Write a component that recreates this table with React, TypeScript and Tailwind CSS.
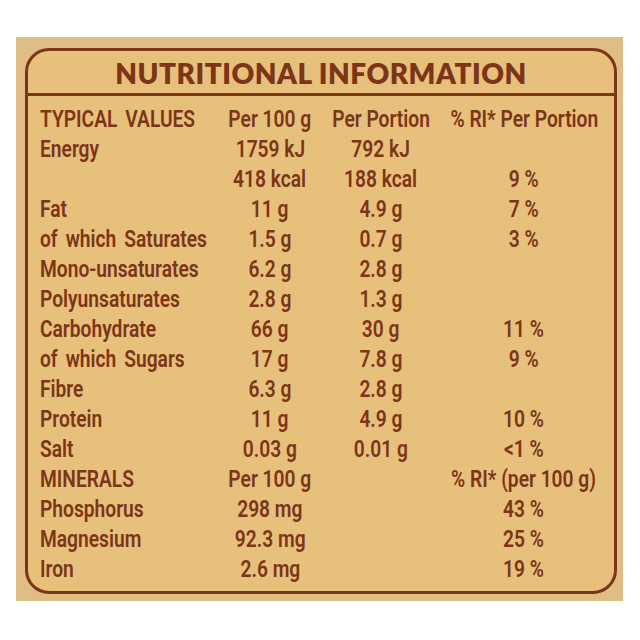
import React from 'react';

type Row = [string, string, string, string];

const rows: Row[] = [
  ['TYPICAL VALUES', 'Per 100 g', 'Per Portion', '% RI* Per Portion'],
  ['Energy', '1759 kJ', '792 kJ', ''],
  ['', '418 kcal', '188 kcal', '9 %'],
  ['Fat', '11 g', '4.9 g', '7 %'],
  ['of which Saturates', '1.5 g', '0.7 g', '3 %'],
  ['Mono-unsaturates', '6.2 g', '2.8 g', ''],
  ['Polyunsaturates', '2.8 g', '1.3 g', ''],
  ['Carbohydrate', '66 g', '30 g', '11 %'],
  ['of which Sugars', '17 g', '7.8 g', '9 %'],
  ['Fibre', '6.3 g', '2.8 g', ''],
  ['Protein', '11 g', '4.9 g', '10 %'],
  ['Salt', '0.03 g', '0.01 g', '<1 %'],
  ['MINERALS', 'Per 100 g', '', '% RI* (per 100 g)'],
  ['Phosphorus', '298 mg', '', '43 %'],
  ['Magnesium', '92.3 mg', '', '25 %'],
  ['Iron', '2.6 mg', '', '19 %'],
];

export default function App() {
  return (
    <div className="w-[640px] h-[640px] bg-white pt-[37px] pl-[16px]">
      <div className="w-[607px] h-[564px] bg-[#dfbd85] pt-[11px] pl-[9px]">
        <div className="w-[592px] h-[546px] rounded-[24px] border-[3px] border-[#7c3517] bg-[#e7c07c] text-[#7c3517]">
          <h1 className="h-[42px] pt-[7px] text-center text-[28px] leading-[30px] font-extrabold tracking-[0.5px] font-['Lato',sans-serif]">
            NUTRITIONAL INFORMATION
          </h1>
          <div className="h-[3px] bg-[#7c3517] mx-[-1px]" />
          <div className="pl-[12px] pt-[8px] font-['Roboto',sans-serif] text-[24px] leading-[30px] font-semibold">
            {rows.map(([label, a, b, c], i) => (
              <div key={i} className="grid grid-cols-[180px_100px_122px_164px] h-[30px]">
                <div className="whitespace-nowrap [word-spacing:4px]">
                  <span className="inline-block scale-x-[0.8] origin-left">{label}</span>
                </div>
                {[a, b, c].map((v, j) => (
                  <div key={j} className="flex justify-center whitespace-nowrap">
                    <span className="inline-block scale-x-[0.8] origin-center">{v}</span>
                  </div>
                ))}
              </div>
            ))}
          </div>
        </div>
      </div>
    </div>
  );
}
